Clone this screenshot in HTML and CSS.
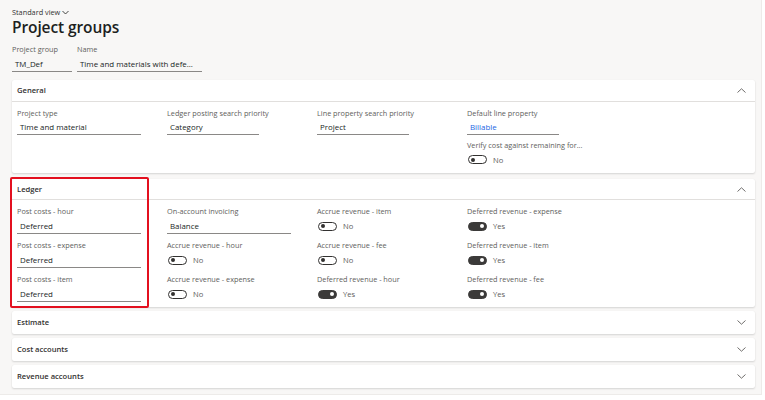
FILE: index.html
```html
<!DOCTYPE html>
<html>
<head>
<meta charset="utf-8">
<link rel="stylesheet" href="styles.css">
</head>
<body>
<div class="page">
  <div class="view">Standard view <svg class="vchev" width="7" height="5" viewBox="0 0 7 5"><polyline points="0.5,1 3.5,4 6.5,1" fill="none" stroke="#323130" stroke-width="0.9"/></svg></div>
  <h1 class="title">Project groups</h1>
  <div class="top-fields">
    <div class="field">
      <div class="label">Project group</div>
      <div class="input w60">TM_Def</div>
    </div>
    <div class="field">
      <div class="label">Name</div>
      <div class="input w125">Time and materials with defe...</div>
    </div>
  </div>

  <div class="cards">
    <section class="card general">
      <div class="card-head"><span>General</span><svg class="chev" width="9" height="5" viewBox="0 0 9 5"><polyline points="0.5,4.5 4.5,0.8 8.5,4.5" fill="none" stroke="#605e5c" stroke-width="0.9"/></svg></div>
      <div class="card-body">
        <div class="col">
          <div class="field"><div class="label">Project type</div><div class="input w124">Time and material</div></div>
        </div>
        <div class="col">
          <div class="field"><div class="label">Ledger posting search priority</div><div class="input w92">Category</div></div>
        </div>
        <div class="col">
          <div class="field"><div class="label">Line property search priority</div><div class="input w92">Project</div></div>
        </div>
        <div class="col">
          <div class="field"><div class="label">Default line property</div><div class="input w92 link">Billable</div></div>
          <div class="field"><div class="label">Verify cost against remaining for...</div><div class="toggle-row"><span class="toggle"></span><span class="tval">No</span></div></div>
        </div>
      </div>
    </section>

    <section class="card ledger">
      <div class="highlight"></div>
      <div class="card-head"><span>Ledger</span><svg class="chev" width="9" height="5" viewBox="0 0 9 5"><polyline points="0.5,4.5 4.5,0.8 8.5,4.5" fill="none" stroke="#605e5c" stroke-width="0.9"/></svg></div>
      <div class="card-body">
        <div class="col">
          <div class="field"><div class="label">Post costs - hour</div><div class="input w124">Deferred</div></div>
          <div class="field"><div class="label">Post costs - expense</div><div class="input w124">Deferred</div></div>
          <div class="field"><div class="label">Post costs - item</div><div class="input w124">Deferred</div></div>
        </div>
        <div class="col">
          <div class="field"><div class="label">On-account invoicing</div><div class="input w124">Balance</div></div>
          <div class="field"><div class="label">Accrue revenue - hour</div><div class="toggle-row"><span class="toggle"></span><span class="tval">No</span></div></div>
          <div class="field"><div class="label">Accrue revenue - expense</div><div class="toggle-row"><span class="toggle"></span><span class="tval">No</span></div></div>
        </div>
        <div class="col">
          <div class="field"><div class="label">Accrue revenue - item</div><div class="toggle-row"><span class="toggle"></span><span class="tval">No</span></div></div>
          <div class="field"><div class="label">Accrue revenue - fee</div><div class="toggle-row"><span class="toggle"></span><span class="tval">No</span></div></div>
          <div class="field"><div class="label">Deferred revenue - hour</div><div class="toggle-row"><span class="toggle on"></span><span class="tval">Yes</span></div></div>
        </div>
        <div class="col">
          <div class="field"><div class="label">Deferred revenue - expense</div><div class="toggle-row"><span class="toggle on"></span><span class="tval">Yes</span></div></div>
          <div class="field"><div class="label">Deferred revenue - item</div><div class="toggle-row"><span class="toggle on"></span><span class="tval">Yes</span></div></div>
          <div class="field"><div class="label">Deferred revenue - fee</div><div class="toggle-row"><span class="toggle on"></span><span class="tval">Yes</span></div></div>
        </div>
      </div>
    </section>

    <section class="card collapsed">
      <div class="card-head"><span>Estimate</span><svg class="chev" width="9" height="5" viewBox="0 0 9 5"><polyline points="0.5,0.5 4.5,4.2 8.5,0.5" fill="none" stroke="#605e5c" stroke-width="0.9"/></svg></div>
    </section>
    <section class="card collapsed">
      <div class="card-head"><span>Cost accounts</span><svg class="chev" width="9" height="5" viewBox="0 0 9 5"><polyline points="0.5,0.5 4.5,4.2 8.5,0.5" fill="none" stroke="#605e5c" stroke-width="0.9"/></svg></div>
    </section>
    <section class="card collapsed">
      <div class="card-head"><span>Revenue accounts</span><svg class="chev" width="9" height="5" viewBox="0 0 9 5"><polyline points="0.5,0.5 4.5,4.2 8.5,0.5" fill="none" stroke="#605e5c" stroke-width="0.9"/></svg></div>
    </section>
  </div>
</div>
</body>
</html>
```

FILE: styles.css
```css
* { box-sizing: border-box; }
html, body { margin: 0; padding: 0; }
body {
  background: #ffffff;
  font-family: "Open Sans", "Noto Sans", sans-serif;
  color: #201f1e;
}
.page {
  width: 762px;
  height: 395px;
  background: #f8f7f6;
  border-right: 1px solid #edebe9;
  border-bottom: 1px solid #edebe9;
  padding: 7px 0 0 12px;
}
.view {
  font-size: 7.3px;
  line-height: 10px;
  color: #323130;
  display: flex;
  align-items: center;
  gap: 2px;
}
.title {
  margin: 0;
  font-size: 15.5px;
  line-height: 21px;
  font-weight: 600;
  color: #201f1e;
  letter-spacing: -0.1px;
}
.top-fields {
  display: flex;
  gap: 5px;
  margin-top: 6px;
}
.label {
  font-size: 7.3px;
  line-height: 11px;
  color: #605e5c;
  white-space: nowrap;
  margin-bottom: 1.5px;
}
.input {
  height: 15px;
  line-height: 14px;
  font-size: 7.9px;
  color: #201f1e;
  padding-left: 3px;
  border-bottom: 1.2px solid #8a8886;
  white-space: nowrap;
  overflow: hidden;
}
.input.link { color: #2266e3; }
.w60 { width: 60px; }
.w125 { width: 125px; }
.w124 { width: 124px; }
.w92 { width: 92px; }

.cards {
  margin-top: 8px;
  width: 743px;
  display: flex;
  flex-direction: column;
  gap: 4px;
}
.card {
  position: relative;
  background: #ffffff;
  border-radius: 2px;
  box-shadow: 0 1px 2px rgba(0,0,0,0.14), 0 0 1px rgba(0,0,0,0.06);
}
.card.general { margin-bottom: 2px; }
.card-head {
  height: 22px;
  display: flex;
  align-items: center;
  justify-content: space-between;
  padding: 0 9px 0 5px;
  font-size: 7.6px;
  font-weight: 600;
  color: #323130;
  border-bottom: 1px solid #e1dfdd;
}
.ledger .card-head { height: 21px; }
.collapsed .card-head { height: 23px; border-bottom: none; }
.chev { display: block; }
.card-body {
  display: flex;
  padding: 6px 0 5px 5px;
}
.general .card-body { padding-bottom: 6px; }
.col {
  width: 150px;
  display: flex;
  flex-direction: column;
  gap: 6.5px;
}
.general .col { gap: 4.5px; }
.toggle-row {
  height: 15px;
  display: flex;
  align-items: center;
  padding-left: 1px;
  gap: 6px;
}
.toggle {
  position: relative;
  width: 19px;
  height: 9px;
  border: 1px solid #323130;
  border-radius: 5px;
  background: #ffffff;
}
.toggle::after {
  content: "";
  position: absolute;
  left: 2px;
  top: 1.5px;
  width: 4px;
  height: 4px;
  border-radius: 50%;
  background: #323130;
}
.toggle.on { background: #3b3a39; border-color: #3b3a39; }
.toggle.on::after { left: auto; right: 2px; background: #ffffff; }
.tval {
  font-size: 7.6px;
  color: #605e5c;
}
.highlight {
  position: absolute;
  left: -2px;
  top: -2px;
  width: 139px;
  bottom: -1px;
  border: 2px solid #e3101f;
  border-radius: 2px;
  pointer-events: none;
  z-index: 2;
}
```
